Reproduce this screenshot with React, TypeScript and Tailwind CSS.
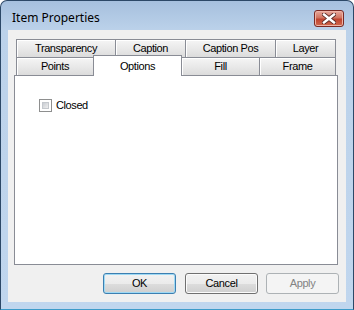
import React from "react";

const tabFont = { fontFamily: '"Liberation Sans", Arial, sans-serif' };

function Tab({ label, w, first }: { label: string; w: string; first?: boolean }) {
  return (
    <div
      className={`${w} ${first ? "" : "-ml-px"} h-[18px] border border-b-0 border-[#898c95] bg-[linear-gradient(to_bottom,#f5f5f5,#e9e9e9_50%,#dcdcdc)] shadow-[inset_1px_1px_0_#ffffff] flex items-center justify-center text-[11px] tracking-[-0.4px] text-black leading-none`}
    >
      {label}
    </div>
  );
}

export default function App() {
  return (
    <div className="w-[354px] h-[310px] bg-white">
      <div className="w-[354px] h-[310px] flex flex-col rounded-t-[7px] border border-[#2c4867] border-b-[#3d9bc9] bg-[linear-gradient(to_bottom,#a6c0de,#bcd2ea_30px,#c0d6ee)] overflow-hidden">
        {/* Title bar */}
        <div className="h-[29px] flex items-start justify-between pl-[11px] pr-[9px]">
          <div
            className="mt-[9px] text-[12px] leading-[16px] text-black"
            style={{ fontFamily: '"Noto Sans", "Open Sans", sans-serif' }}
          >
            Item Properties
          </div>
          <div className="mt-[9px] w-[30px] h-[17px] rounded-[3px] border border-[#7a2a24] bg-[linear-gradient(to_bottom,#e8a99d,#d0735f_45%,#c0432f_55%,#cf6a4f)] shadow-[inset_0_0_0_1px_#eeb3a6] flex items-center justify-center">
            <svg width="14" height="11" viewBox="0 0 14 11">
              <path d="M2 1.5 L12 9.5 M12 1.5 L2 9.5" stroke="#5a2a26" strokeWidth="4.2" strokeLinecap="square" />
              <path d="M2 1.5 L12 9.5 M12 1.5 L2 9.5" stroke="#ffffff" strokeWidth="2.4" strokeLinecap="square" />
            </svg>
          </div>
        </div>
        {/* Client */}
        <div className="mx-[7px] h-[272px] bg-[#f0f0f0] flex flex-col" style={tabFont}>
          <div className="pt-[9px] pl-[6px]">
            <div className="flex flex-col ml-[2px]">
              <div className="flex">
                <Tab label="Transparency" w="w-[100px]" first />
                <Tab label="Caption" w="w-[71px]" />
                <Tab label="Caption Pos" w="w-[91px]" />
                <Tab label="Layer" w="w-[61px]" />
              </div>
              <div className="flex items-end h-[18px]">
                <Tab label="Points" w="w-[78px]" first />
                <div className="relative z-10 -ml-px w-[89px] h-[21px] -mb-px bg-white border border-b-0 border-[#898c95] flex items-center justify-center text-[11px] tracking-[-0.4px] leading-none text-black">
                  Options
                </div>
                <div className="-ml-px flex">
                  <Tab label="Fill" w="w-[79px]" first />
                  <Tab label="Frame" w="w-[77px]" />
                </div>
              </div>
            </div>
            <div className="w-[324px] h-[190px] bg-white border border-[#898c95] pl-[24px] pt-[23px]">
              <div className="flex items-center gap-[4px]">
                <div className="w-[13px] h-[13px] border border-[#8e8f8f] bg-white p-[2px]">
                  <div className="w-full h-full bg-[linear-gradient(135deg,#c8ccd2,#eeeeee)] border border-[#c4c8cd]" />
                </div>
                <span className="text-[11px] tracking-[-0.4px] leading-none text-black">Closed</span>
              </div>
            </div>
          </div>
          <div className="mt-[8px] pr-[7px] flex justify-end">
            <div className="w-[73px] h-[21px] rounded-[3px] border border-[#3c7fb1] bg-[linear-gradient(to_bottom,#f2f2f2_0%,#ebebeb_50%,#dddddd_50%,#cfcfcf_100%)] shadow-[inset_0_0_0_1px_#9fd9f4] flex items-center justify-center text-[11px] tracking-[-0.4px] text-black">
              OK
            </div>
            <div className="ml-[9px] w-[73px] h-[21px] rounded-[3px] border border-[#707070] bg-[linear-gradient(to_bottom,#f2f2f2_0%,#ebebeb_50%,#dddddd_50%,#cfcfcf_100%)] shadow-[inset_0_0_0_1px_#fbfbfb] flex items-center justify-center text-[11px] tracking-[-0.4px] text-black">
              Cancel
            </div>
            <div className="ml-[8px] w-[73px] h-[21px] rounded-[3px] border border-[#adb2b5] bg-[#f4f4f4] flex items-center justify-center text-[11px] tracking-[-0.4px] text-[#838383]">
              Apply
            </div>
          </div>
        </div>
      </div>
    </div>
  );
}
